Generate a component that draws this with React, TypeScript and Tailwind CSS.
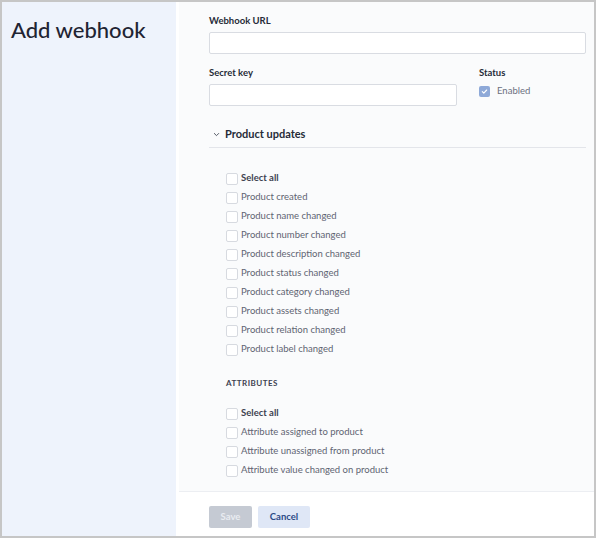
import React from "react";

const font = { fontFamily: "Lato, 'Liberation Sans', sans-serif" };

function Box({ checked = false }: { checked?: boolean }) {
  if (checked) {
    return (
      <span className="flex h-[11px] w-[11px] items-center justify-center rounded-[2px] bg-[#8ea9d8]">
        <svg width="7" height="7" viewBox="0 0 8 8" fill="none">
          <path d="M1.5 4.2 L3.2 5.8 L6.5 2.3" stroke="white" strokeWidth="1.3" strokeLinecap="round" strokeLinejoin="round" />
        </svg>
      </span>
    );
  }
  return <span className="h-[12px] w-[12px] shrink-0 rounded-[2px] border border-[#d7dae0] bg-white" />;
}

function Row({ label, bold = false }: { label: string; bold?: boolean }) {
  return (
    <div className="flex h-[19px] items-center gap-[3px]">
      <Box />
      <span className={bold ? "text-[9.5px] font-bold text-[#3d4250]" : "text-[9.5px] text-[#5f6472]"}>{label}</span>
    </div>
  );
}

const products = [
  "Product created",
  "Product name changed",
  "Product number changed",
  "Product description changed",
  "Product status changed",
  "Product category changed",
  "Product assets changed",
  "Product relation changed",
  "Product label changed",
];

const attributes = [
  "Attribute assigned to product",
  "Attribute unassigned from product",
  "Attribute value changed on product",
];

export default function App() {
  return (
    <div style={font} className="flex h-[538px] w-[596px] border-2 border-[#c6c6c6] bg-white">
      <div className="w-[174px] shrink-0 bg-[#eef3fc] pl-[9px] pt-[13px]">
        <h1 className="text-[22px] font-medium leading-[30px] text-[#1f2433]">Add webhook</h1>
      </div>
      <div className="flex flex-1 flex-col pl-[3px]">
        <div className="h-[490px] border-b border-[#eceef2] bg-[#fafbfc] pl-[30px] pr-[8px] pt-[13px]">
          <label className="block text-[9.5px] font-bold leading-[12px] text-[#262b38]">Webhook URL</label>
          <div className="mt-[5px] h-[22px] rounded-[2px] border border-[#d9dce2] bg-white" />
          <div className="mt-[13px] flex">
            <div className="w-[248px]">
              <label className="block text-[9.5px] font-bold leading-[12px] text-[#262b38]">Secret key</label>
              <div className="mt-[5px] h-[22px] rounded-[2px] border border-[#d9dce2] bg-white" />
            </div>
            <div className="ml-[22px]">
              <label className="block text-[9.5px] font-bold leading-[12px] text-[#262b38]">Status</label>
              <div className="mt-[5px] flex items-center gap-[7px]">
                <Box checked />
                <span className="text-[9.5px] text-[#6b7080]">Enabled</span>
              </div>
            </div>
          </div>
          <div className="mt-[19px] flex h-[18px] items-center gap-[5px] pl-[4px]">
            <svg width="7" height="7" viewBox="0 0 8 8" fill="none">
              <path d="M1.5 2.8 L4 5.3 L6.5 2.8" stroke="#3d4250" strokeWidth="1" strokeLinecap="round" strokeLinejoin="round" />
            </svg>
            <span className="text-[11px] font-bold text-[#262b38]">Product updates</span>
          </div>
          <div className="mt-[4px] h-px bg-[#e3e5ea]" />
          <div className="pl-[17px] pt-[21px]">
            <Row label="Select all" bold />
            {products.map((p) => (
              <Row key={p} label={p} />
            ))}
            <div className="mt-[18px] text-[8px] font-bold tracking-[0.06em] text-[#3d4250]">ATTRIBUTES</div>
            <div className="mt-[15px]">
              <Row label="Select all" bold />
              {attributes.map((p) => (
                <Row key={p} label={p} />
              ))}
            </div>
          </div>
        </div>
        <div className="flex gap-[6px] pl-[30px] pt-[14px]">
          <button className="h-[22px] w-[43px] rounded-[2px] bg-[#c5cad3] text-[9.5px] font-bold text-[#e9ecf1]">Save</button>
          <button className="h-[22px] w-[52px] rounded-[2px] bg-[#dfe7f6] text-[9.5px] font-bold text-[#2c4a87]">Cancel</button>
        </div>
      </div>
    </div>
  );
}
